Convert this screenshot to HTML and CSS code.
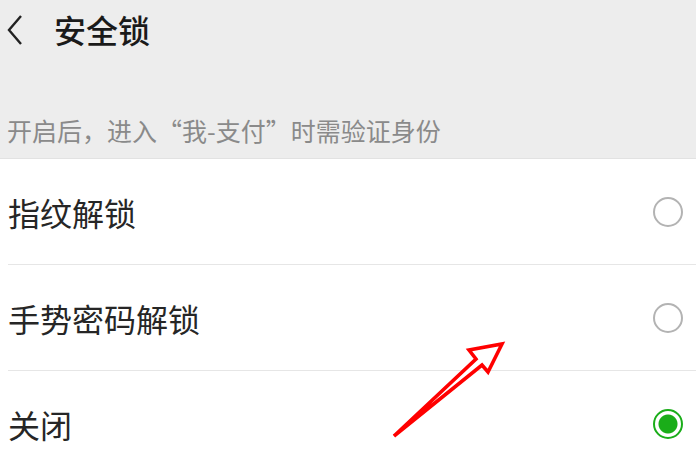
FILE: index.html
```html
<!DOCTYPE html>
<html lang="zh">
<head>
<meta charset="utf-8">
<link rel="stylesheet" href="styles.css">
</head>
<body>
<div class="page">
  <header class="bar">
    <svg class="back" width="18" height="32" viewBox="0 0 18 32"><path d="M15 2 L3 16 L15 30" fill="none" stroke="#222" stroke-width="2.4"/></svg>
    <span class="title">安全锁</span>
  </header>
  <div class="desc">开启后，进入“我-支付”时需验证身份</div>
  <ul class="list">
    <li class="row"><span>指纹解锁</span><span class="radio"></span></li>
    <li class="row"><span>手势密码解锁</span><span class="radio"></span></li>
    <li class="row"><span>关闭</span><span class="radio on"></span></li>
  </ul>
  <svg class="arrow" width="696" height="462" viewBox="0 0 696 462">
    <polygon points="394,436 476,359 469,350 502,344 488,372 482,365" fill="#fff" stroke="#f00" stroke-width="3.6" stroke-linejoin="miter"/>
  </svg>
</div>
</body>
</html>
```
FILE: styles.css
```css
* { box-sizing: border-box; }
html, body { margin: 0; padding: 0; }
body { font-family: "Noto Sans CJK SC", "Noto Sans", sans-serif; background: #fff; }
.page { position: relative; width: 696px; height: 462px; overflow: hidden; background: #fff; }
.bar { height: 60px; background: #ededed; display: flex; align-items: center; padding-left: 6px; }
.back { display: block; }
.title { margin-left: 30px; font-size: 32px; color: #1a1a1a; font-weight: 500; line-height: 1; margin-top: -2px; }
.desc { background: #ededed; height: 99px; padding: 55px 0 0 7px; font-size: 25px; color: #8a8a8a; line-height: 30px; border-bottom: 1px solid #e2e2e2; }
.list { list-style: none; margin: 0; padding: 0 0 0 8px; background: #fff; }
.row { height: 106px; display: flex; align-items: center; justify-content: space-between; padding-right: 13px; font-size: 32px; color: #262626; border-bottom: 1px solid #e6e6e6; }
.radio { width: 30px; height: 30px; border-radius: 50%; border: 2.5px solid #b3b3b3; display: block; }
.radio.on { border-color: #1aad19; background: radial-gradient(circle, #1aad19 0 9px, #fff 10px); }
.arrow { position: absolute; left: 0; top: 0; pointer-events: none; }
```
